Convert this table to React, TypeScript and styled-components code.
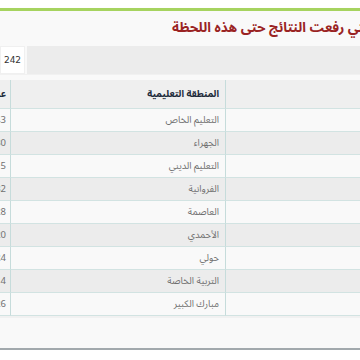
import React from "react";
import styled, { createGlobalStyle } from "styled-components";

const GlobalStyle = createGlobalStyle`
  html, body {
    margin: 0;
    padding: 0;
    background: #ffffff;
    overflow: hidden;
  }
  body {
    font-family: "Noto Sans Arabic", "Noto Naskh Arabic", Tahoma, "DejaVu Sans", sans-serif;
  }
`;

const Page = styled.div`
  width: 600px;
  padding-top: 8px;
  direction: rtl;
`;

const Panel = styled.section`
  background: #f9f9f9;
  border-top: 3px solid #a6d35f;
  border-bottom: 2px solid #a2a9ad;
  box-shadow: 0 1px 2px rgba(0, 0, 0, 0.08);
  padding-bottom: 30px;
`;

const TitleBar = styled.div`
  height: 35px;
  box-sizing: border-box;
  padding-bottom: 3px;
  display: flex;
  align-items: center;
  justify-content: flex-end;
  padding-left: 172px;
`;

const Title = styled.h2`
  margin: 0;
  font-size: 13.5px;
  font-weight: bold;
  color: #9a2323;
  white-space: nowrap;
`;

const InfoRow = styled.div`
  display: flex;
  height: 28px;
  gap: 2px;
  border-bottom: 1px solid #f1f1f1;
`;

const InfoLabel = styled.div`
  flex: 1;
  background: #ececec;
`;

const InfoCount = styled.div`
  width: 25px;
  background: #ffffff;
  border: 1px solid #f0f0f0;
  box-sizing: border-box;
  display: flex;
  align-items: center;
  justify-content: center;
  font-size: 9px;
  color: #333;
  font-family: "DejaVu Sans", sans-serif;
`;

const Table = styled.div`
  margin-top: 5px;
  display: grid;
  grid-template-columns: 1fr 215px 10px;
  border-bottom: 2px solid #f1f1f1;
`;

const Cell = styled.div<{ $alt?: boolean; $head?: boolean; $edge?: boolean }>`
  height: ${(p) => (p.$head ? 29 : 23)}px;
  box-sizing: border-box;
  background: ${(p) => (p.$head ? "#efefef" : p.$alt ? "#ececec" : "#f9f9f9")};
  border-bottom: 1px solid #d2e3e2;
  border-left: ${(p) => (p.$edge ? "none" : "1px solid #c6dcdb")};
  display: flex;
  align-items: center;
  padding-right: ${(p) => (p.$edge ? 4 : 6)}px;
  white-space: nowrap;
  font-size: 9.5px;
  font-stretch: 75%;
  font-weight: ${(p) => (p.$head ? "bold" : "normal")};
  color: ${(p) => (p.$head ? "#1d2b3a" : "#707070")};
`;

const rows: [string, string][] = [
  ["التعليم الخاص", "43"],
  ["الجهراء", "30"],
  ["التعليم الديني", "15"],
  ["الفروانية", "32"],
  ["العاصمة", "28"],
  ["الأحمدي", "20"],
  ["حولي", "24"],
  ["التربية الخاصة", "14"],
  ["مبارك الكبير", "26"],
];

export default function App() {
  return (
    <>
      <GlobalStyle />
      <Page>
        <Panel>
          <TitleBar>
            <Title>المناطق التعليمية التي رفعت النتائج حتى هذه اللحظة</Title>
          </TitleBar>
          <InfoRow>
            <InfoLabel />
            <InfoCount>242</InfoCount>
          </InfoRow>
          <Table>
            <Cell $head />
            <Cell $head>المنطقة التعليمية</Cell>
            <Cell $head $edge>عدد المدارس</Cell>
            {rows.map(([name, count], i) => (
              <React.Fragment key={name}>
                <Cell $alt={i % 2 === 1} />
                <Cell $alt={i % 2 === 1}>{name}</Cell>
                <Cell $alt={i % 2 === 1} $edge>
                  {count}
                </Cell>
              </React.Fragment>
            ))}
          </Table>
        </Panel>
      </Page>
    </>
  );
}
